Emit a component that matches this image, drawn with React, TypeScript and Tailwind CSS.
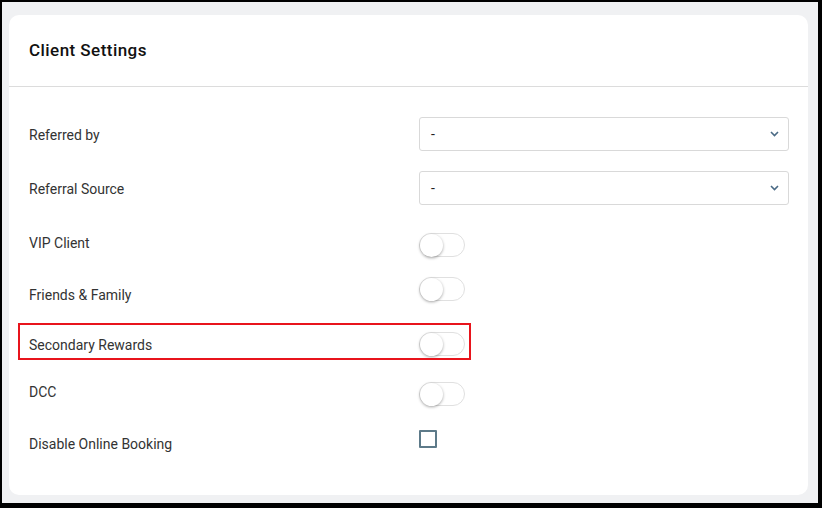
import React from "react";

function Chevron() {
  return (
    <svg width="9" height="6" viewBox="0 0 9 6" className="shrink-0">
      <path d="M1 1 L4.5 4.5 L8 1" fill="none" stroke="#4a6a85" strokeWidth="1.6" />
    </svg>
  );
}

function Select() {
  return (
    <div className="w-[370px] h-[34px] border border-[#d9d9d9] rounded-[3px] bg-white flex items-center justify-between pl-[11px] pr-[9px]">
      <span className="text-[14px] text-[#222]">-</span>
      <Chevron />
    </div>
  );
}

function Toggle() {
  return (
    <div className="w-[46px] h-[24px] rounded-full border border-[#e0e0e0] bg-white flex items-center">
      <div className="w-[23px] h-[23px] rounded-full bg-white shadow-[0_1px_3px_rgba(0,0,0,0.35)]" />
    </div>
  );
}

export default function App() {
  const font = { fontFamily: "Roboto, 'Liberation Sans', sans-serif" };
  return (
    <div
      className="w-[822px] h-[508px] bg-black pt-[2px] pl-[2px] pr-[4px] pb-[5px]"
      style={font}
    >
      <div className="w-full h-full bg-[#f0f1f3] pt-[13px] pl-[7px] pr-[10px] pb-[8px]">
        <div className="w-full h-full bg-white rounded-[10px] flex flex-col">
          <div className="h-[72px] border-b border-[#dcdcdc] flex items-center pl-[20px] pt-[1px] shrink-0">
            <span className="text-[17px] font-medium text-[#111] tracking-[0.45px]">Client Settings</span>
          </div>
          <div className="flex flex-col pl-[20px] pt-[30px]">
            <div className="flex items-center h-[34px]">
              <div className="w-[390px] text-[14px] text-[#333] pt-[2px]">Referred by</div>
              <Select />
            </div>
            <div className="flex items-center h-[34px] mt-[20px]">
              <div className="w-[390px] text-[14px] text-[#333] pt-[2px]">Referral Source</div>
              <Select />
            </div>
            <div className="flex items-start mt-[28px]">
              <div className="w-[390px] text-[14px] leading-[20px] text-[#333]">VIP Client</div>
              <Toggle />
            </div>
            <div className="flex items-start h-[24px] mt-[20px]">
              <div className="w-[390px] text-[14px] leading-[20px] text-[#333] mt-[8px]">Friends &amp; Family</div>
              <Toggle />
            </div>
            <div className="relative flex items-start h-[24px] mt-[31px]">
              <div className="absolute left-[-11px] top-[-9px] w-[453px] h-[37px] border-2 border-[#e8141c] pointer-events-none" />
              <div className="w-[390px] text-[14px] leading-[20px] text-[#333] mt-[3px]">Secondary Rewards</div>
              <Toggle />
            </div>
            <div className="flex items-start h-[24px] mt-[26px]">
              <div className="w-[390px] text-[14px] leading-[20px] text-[#333]">DCC</div>
              <Toggle />
            </div>
            <div className="flex items-start mt-[24px]">
              <div className="w-[390px] text-[14px] leading-[20px] text-[#333] mt-[4px]">Disable Online Booking</div>
              <div className="w-[18px] h-[18px] border-2 border-[#5d7a89] rounded-[1px]" />
            </div>
          </div>
        </div>
      </div>
    </div>
  );
}
